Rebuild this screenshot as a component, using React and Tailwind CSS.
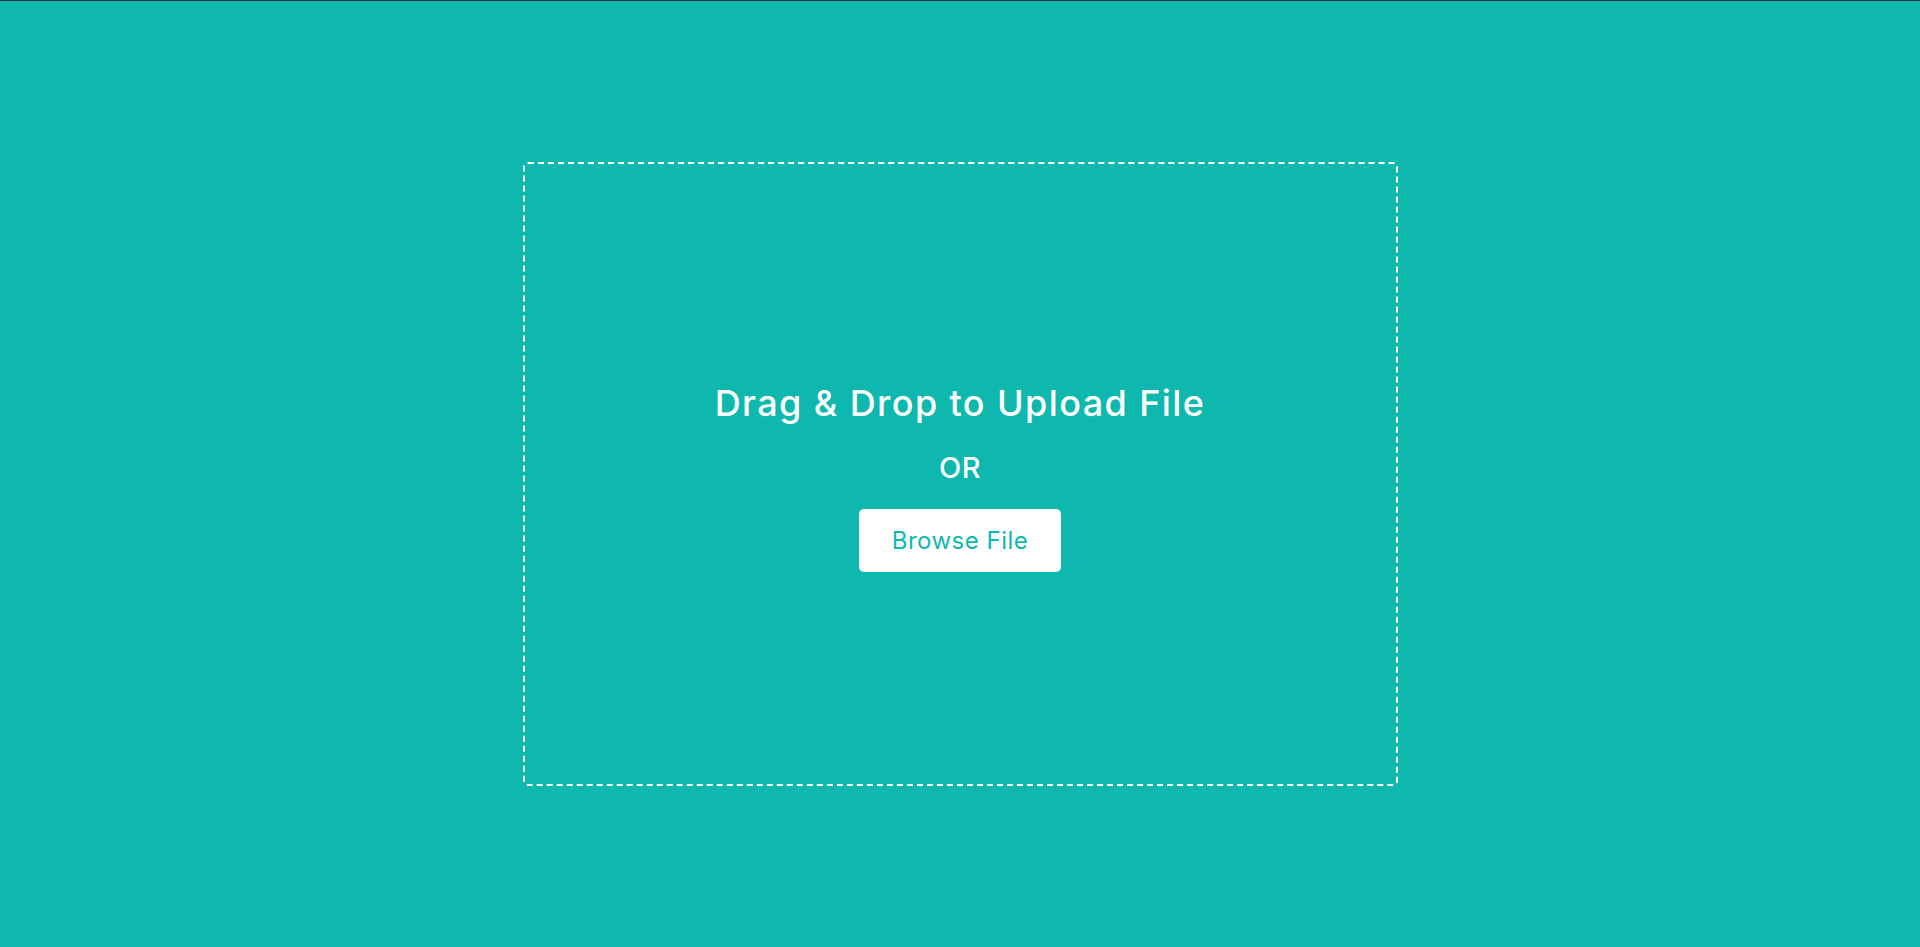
export default function App() {
  return (
    <div
      className="h-[947px] w-full bg-[#0eb8ae] border-t border-[#2d3440] flex items-center justify-center"
      style={{ fontFamily: 'Inter, "Open Sans", sans-serif' }}
    >
      <div className="w-[875px] h-[624px] border-2 border-dashed border-white rounded-[5px] flex flex-col items-center justify-center">
        <h1 className="text-white text-[36px] leading-[54px] font-medium tracking-[1.4px]">
          Drag &amp; Drop to Upload File
        </h1>
        <div className="text-white text-[29px] leading-[40px] font-medium mt-[18px] tracking-[0.5px]">OR</div>
        <button className="mt-[21px] w-[202px] h-[63px] bg-white rounded-[5px] text-[#0eb8ae] text-[24px] font-normal tracking-[0.5px]">
          Browse File
        </button>
      </div>
    </div>
  );
}
